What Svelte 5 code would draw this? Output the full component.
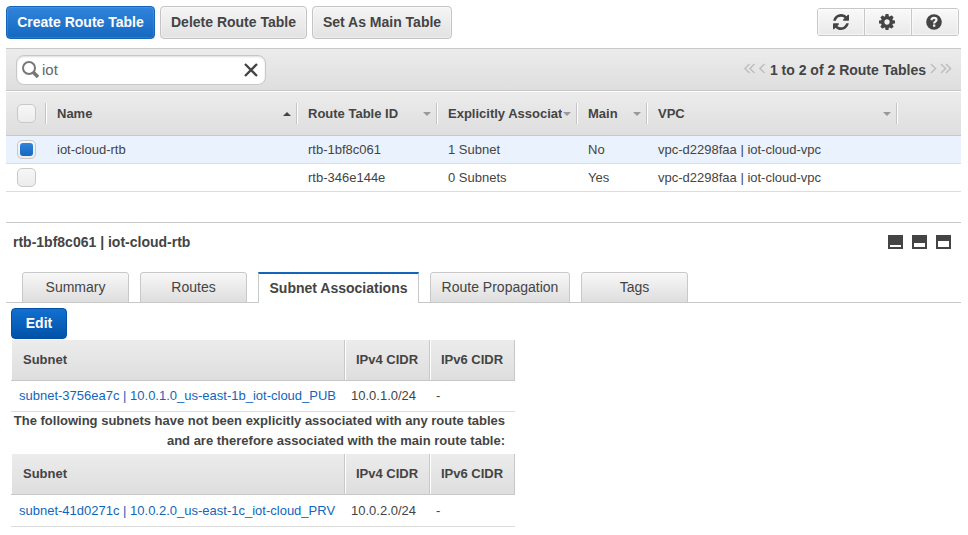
<script>
  const routeTables = [
    { name: 'iot-cloud-rtb', id: 'rtb-1bf8c061', subnets: '1 Subnet', main: 'No', selected: true },
    { name: '', id: 'rtb-346e144e', subnets: '0 Subnets', main: 'Yes', selected: false },
  ];
  const tabs = [
    { label: 'Summary', width: 107 },
    { label: 'Routes', width: 107 },
    { label: 'Subnet Associations', width: 161, active: true },
    { label: 'Route Propagation', width: 140 },
    { label: 'Tags', width: 107 },
  ];
  let filter = $state('iot');
</script>

{#snippet associations(link, cidr, second)}
  <div class="assoc" class:second>
    <div class="ahead">
      <span>Subnet</span><span>IPv4 CIDR</span><span>IPv6 CIDR</span>
    </div>
    <div class="arow">
      <a href="#subnet">{link}</a><span>{cidr}</span><span>-</span>
    </div>
  </div>
{/snippet}

<main>
  <div class="toolbar">
    <button class="btn primary" style:width="149px"><span>Create Route Table</span></button>
    <button class="btn" style:width="147px"><span>Delete Route Table</span></button>
    <button class="btn" style:width="140px"><span>Set As Main Table</span></button>
    <div class="icons">
      <button aria-label="Refresh">
        <svg width="16" height="16" viewBox="0 0 1536 1536"><path fill="#444" d="M1511 928q0 5-1 7-64 268-268 434.500T764 1536q-146 0-282.500-55T238 1324l-129 129q-19 19-45 19t-45-19-19-45V960q0-26 19-45t45-19h448q26 0 45 19t19 45-19 45l-137 137q71 66 161 102t187 36q134 0 250-65t186-179q11-17 53-117 8-23 30-23h192q13 0 22.500 9.500t9.500 22.500zm25-800v448q0 26-19 45t-45 19h-448q-26 0-45-19t-19-45 19-45l138-138Q969 256 768 256q-134 0-250 65T332 500q-11 17-53 117-8 23-30 23H50q-13 0-22.500-9.500T18 608v-7q65-268 270-434.500T768 0q146 0 284 55.500T1297 212l130-129q19-19 45-19t45 19 19 45z"/></svg>
      </button>
      <button aria-label="Settings">
        <svg width="16" height="16" viewBox="0 0 1536 1536"><path fill="#444" d="M1024 768q0-106-75-181t-181-75-181 75-75 181 75 181 181 75 181-75 75-181zm512-109v222q0 12-8 23t-20 13l-185 28q-19 54-39 91 35 50 107 138 10 12 10 25t-9 23q-27 37-99 108t-94 71q-12 0-26-9l-138-108q-44 23-91 38-16 136-29 186-7 28-36 28H657q-14 0-24.500-8.500T621 1506l-28-184q-49-16-90-37l-141 107q-10 9-25 9-14 0-25-11-126-114-165-168-7-10-7-23 0-12 8-23 15-21 51-66.500t54-70.500q-27-50-41-99L29 913q-13-2-21-12.500T0 877V655q0-12 8-23t19-13l186-28q14-46 39-92-40-57-107-138-10-12-10-24 0-10 9-23 26-36 98.500-107.500T337 135q13 0 26 10l138 107q44-23 91-38 16-136 29-186 7-28 36-28h222q14 0 24.500 8.500T915 30l28 184q49 16 90 37l142-107q9-9 24-9 13 0 25 10 129 119 165 170 7 8 7 22 0 12-8 23-15 21-51 66.500t-54 70.500q26 50 41 98l183 28q13 2 21 12.500t8 23.500z"/></svg>
      </button>
      <button aria-label="Help">
        <svg width="16" height="16" viewBox="0 0 16 16"><circle cx="8" cy="8" r="7.8" fill="#444"/><path d="M5.400 6.200C5.700 4.500 6.600 3.900 8 3.900c1.600 0 2.500.9 2.500 2 0 1.700-2.400 1.700-2.400 3.500" fill="none" stroke="#f4f4f4" stroke-width="2.200"/><path d="M7 10.500h2.300v2.300H7z" fill="#f4f4f4"/></svg>
      </button>
    </div>
  </div>

  <section class="list">
    <div class="filterbar">
      <label class="search">
        <svg width="20" height="20" viewBox="0 0 20 20"><circle cx="8" cy="8" r="6" fill="none" stroke="#777" stroke-width="2"/><path d="M12 12l5 5" stroke="#777" stroke-width="3.600"/></svg>
        <input bind:value={filter} aria-label="Filter" />
        <svg width="14" height="14" viewBox="0 0 14 14"><path d="M1 1l12 12M13 1L1 13" stroke="#444" stroke-width="2.300"/></svg>
      </label>
      <div class="pager">
        <svg width="22" height="12" viewBox="0 0 22 12"><path d="M5.500 1L.9 5.500l4.600 4.500M10.500 1L5.900 5.500l4.600 4.500M20.500 1l-4.600 4.500 4.600 4.500" fill="none" stroke="#bbb" stroke-width="1.300"/></svg>
        <b>1 to 2 of 2 Route Tables</b>
        <svg width="22" height="12" viewBox="0 0 22 12"><path d="M1 1l4.600 4.500L1 10M11 1l4.600 4.500L11 10M16 1l4.600 4.500L16 10" fill="none" stroke="#bbb" stroke-width="1.300"/></svg>
      </div>
    </div>
    <div class="cols head">
      <div><i class="check"></i></div>
      <div><span>Name</span><svg width="8" height="4"><path d="M0 4L4 0l4 4z" fill="#444"/></svg></div>
      <div><span>Route Table ID</span><svg width="8" height="4"><path d="M0 0h8L4 4z" fill="#999"/></svg></div>
      <div><span class="clip">Explicitly Associated</span><svg width="8" height="4"><path d="M0 0h8L4 4z" fill="#999"/></svg></div>
      <div><span>Main</span><svg width="8" height="4"><path d="M0 0h8L4 4z" fill="#999"/></svg></div>
      <div><span>VPC</span><svg width="8" height="4"><path d="M0 0h8L4 4z" fill="#999"/></svg></div>
    </div>
    {#each routeTables as rt}
      <div class="cols row" class:selected={rt.selected}>
        <div><i class="check" class:on={rt.selected}></i></div>
        <div><span>{rt.name}</span></div>
        <div><span>{rt.id}</span></div>
        <div><span>{rt.subnets}</span></div>
        <div><span>{rt.main}</span></div>
        <div><span>vpc-d2298faa | iot-cloud-vpc</span></div>
      </div>
    {/each}
  </section>

  <section class="detail">
    <header>
      <b>rtb-1bf8c061 | iot-cloud-rtb</b>
      <div class="panes">
        {#each [2, 4, 6] as h}
          <svg width="15" height="14" shape-rendering="crispEdges"><path d="M0 0h15v14H0z" fill="#444"/><rect x="2" y={12 - h} width="11" height={h} fill="#fff"/></svg>
        {/each}
      </div>
    </header>
    <nav>
      {#each tabs as tab}
        <div class="tab" class:active={tab.active} style:width="{tab.width}px"><span>{tab.label}</span></div>
      {/each}
    </nav>
    <div class="content">
      <button class="btn edit"><span>Edit</span></button>
      {@render associations('subnet-3756ea7c | 10.0.1.0_us-east-1b_iot-cloud_PUB', '10.0.1.0/24', false)}
      <p>The following subnets have not been explicitly associated with any route tables<br />and are therefore associated with the main route table:</p>
      {@render associations('subnet-41d0271c | 10.0.2.0_us-east-1c_iot-cloud_PRV', '10.0.2.0/24', true)}
    </div>
  </section>
</main>

<style>
  :global(body) { background: #fff; }
  main {
    box-sizing: border-box;
    width: 968px;
    height: 535px;
    overflow: hidden;
    padding: 6px 7px 0 6px;
    font: 13px/20px "Liberation Sans", Arial, sans-serif;
    color: #444;
  }
  button { font: inherit; color: inherit; padding: 0; margin: 0; }
  svg { display: block; flex: none; }
  .toolbar { display: flex; gap: 5px; height: 42px; align-items: flex-start; }
  .btn {
    box-sizing: border-box;
    height: 33px;
    border: 1px solid #c4c4c4;
    border-radius: 4px;
    background: linear-gradient(#f5f5f5, #e2e2e2);
    box-shadow: inset 0 0 1px 1px rgba(255, 255, 255, .35);
    font-weight: bold;
    font-size: 14px;
    white-space: nowrap;
    line-height: 31px;
  }
  .primary {
    color: #fff;
    border-color: #1166bb;
    background: linear-gradient(#3084dc, #1468bf);
    box-shadow: inset 0 0 1px 1px rgba(255, 255, 255, .12);
  }
  .icons { display: flex; margin: 2px 2px 0 auto; border: 1px solid #c8c8c8; border-radius: 3px; overflow: hidden; }
  .icons button {
    width: 46px;
    height: 26px;
    border: 0;
    background: linear-gradient(#f9f9f9, #e9e9e9);
    box-shadow: inset 0 0 2px 1px rgba(255, 255, 255, .6);
    display: flex;
    align-items: center;
    justify-content: center;
  }
  .icons button + button { border-left: 1px solid #c8c8c8; width: 47px; padding-right: 3px; }
  .filterbar {
    box-sizing: border-box;
    height: 43px;
    border-top: 1px solid #c8c8c8;
    border-bottom: 1px solid #c8c8c8;
    background: linear-gradient(#ececec, #dedede);
    display: flex;
    align-items: center;
    justify-content: space-between;
    padding: 0 9px 0 10px;
  }
  .search {
    box-sizing: border-box;
    width: 250px;
    height: 30px;
    border: 1px solid #c8c8c8;
    border-radius: 8px;
    background: #fff;
    box-shadow: inset 0 1px 2px #ddd;
    display: flex;
    align-items: center;
    padding: 0 7px 0 4px;
  }
  input { flex: 1; min-width: 0; border: 0; padding: 0 0 0 1px; outline: 0; background: none; font: 15px "Liberation Sans", Arial, sans-serif; color: #666; }
  .pager { display: flex; gap: 4px; align-items: center; font-size: 14px; }
  .pager svg { margin-top: -2px; }
  .cols { box-sizing: border-box; display: grid; grid-template-columns: 41px 251px 140px 140px 70px 250px; }
  .cols > div { display: flex; align-items: center; padding-left: 10px; min-width: 0; white-space: nowrap; }
  .cols > div:first-child { padding-left: 11px; }
  .head { height: 45px; border-top: 1px solid #fff; border-bottom: 1px solid #c8c8c8; background: linear-gradient(#ececec, #dedede); font-weight: bold; }
  .head > div {
    height: 21px;
    align-self: center;
    justify-content: space-between;
    padding-right: 6px;
    border-right: 1px solid #fff;
    box-shadow: inset -1px 0 #c4c4c4;
  }
  .clip { width: 114px; overflow: hidden; flex: none; }
  .check {
    box-sizing: border-box;
    flex: none;
    width: 19px;
    height: 19px;
    border: 1px solid #c8c8c8;
    border-radius: 5px;
    background: linear-gradient(#f7f7f7, #ececec);
  }
  .on { display: flex; padding: 2px; }
  .on::before { content: ''; flex: 1; border-radius: 3px; background: linear-gradient(#3084dc, #1468bf); }
  .row { height: 28px; border-bottom: 1px solid #ddd; }
  .selected { background: #eaf2fe; }
  .detail { margin-top: 30px; border-top: 1px solid #c8c8c8; }
  header { display: flex; justify-content: space-between; height: 38px; align-items: center; padding: 0 10px 0 7px; font-size: 14px; }
  .panes { display: flex; gap: 9px; }
  nav { display: flex; gap: 11px; height: 42px; align-items: flex-end; padding-left: 16px; box-shadow: inset 0 -1px #c8c8c8; }
  .tab {
    box-sizing: border-box;
    height: 31px;
    border: 1px solid #c8c8c8;
    border-radius: 3px 3px 0 0;
    background: linear-gradient(#f7f7f7, #dedede);
    text-align: center;
    font-size: 14px;
    line-height: 28px;
  }
  .active { background: #fff; border-top: 2px solid #1166bb; border-bottom: 0; border-radius: 0; font-weight: bold; line-height: 29px; }
  .content { padding: 5px 0 0 5px; width: 504px; }
  .edit {
    display: block;
    width: 56px;
    height: 31px;
    line-height: 29px;
    color: #fff;
    border-color: #0450a5;
    background: linear-gradient(#1270d0, #0052a8);
    box-shadow: none;
  }
  .assoc { margin-top: 1px; }
  .ahead, .arow { box-sizing: border-box; display: grid; grid-template-columns: 334px 85px 85px; }
  .ahead { height: 41px; font-weight: bold; border-bottom: 1px solid #c8c8c8; line-height: 39px; }
  .ahead span { background: linear-gradient(#ececec, #dedede); padding-left: 10px; border-left: 1px solid #fff; border-right: 1px solid #c8c8c8; white-space: nowrap; }
  .ahead span:first-child { padding-left: 11px; }
  .arow { height: 31px; border-bottom: 1px solid #ddd; line-height: 30px; white-space: nowrap; }
  .arow > * { padding-left: 6px; }
  .arow > a { padding-left: 8px; color: #1166bb; text-decoration: none; }
  .second .arow { height: 32px; line-height: 31px; }
  p { margin: -1px 10px 0 0; height: 42px; text-align: right; font-weight: bold; white-space: nowrap; }
</style>
